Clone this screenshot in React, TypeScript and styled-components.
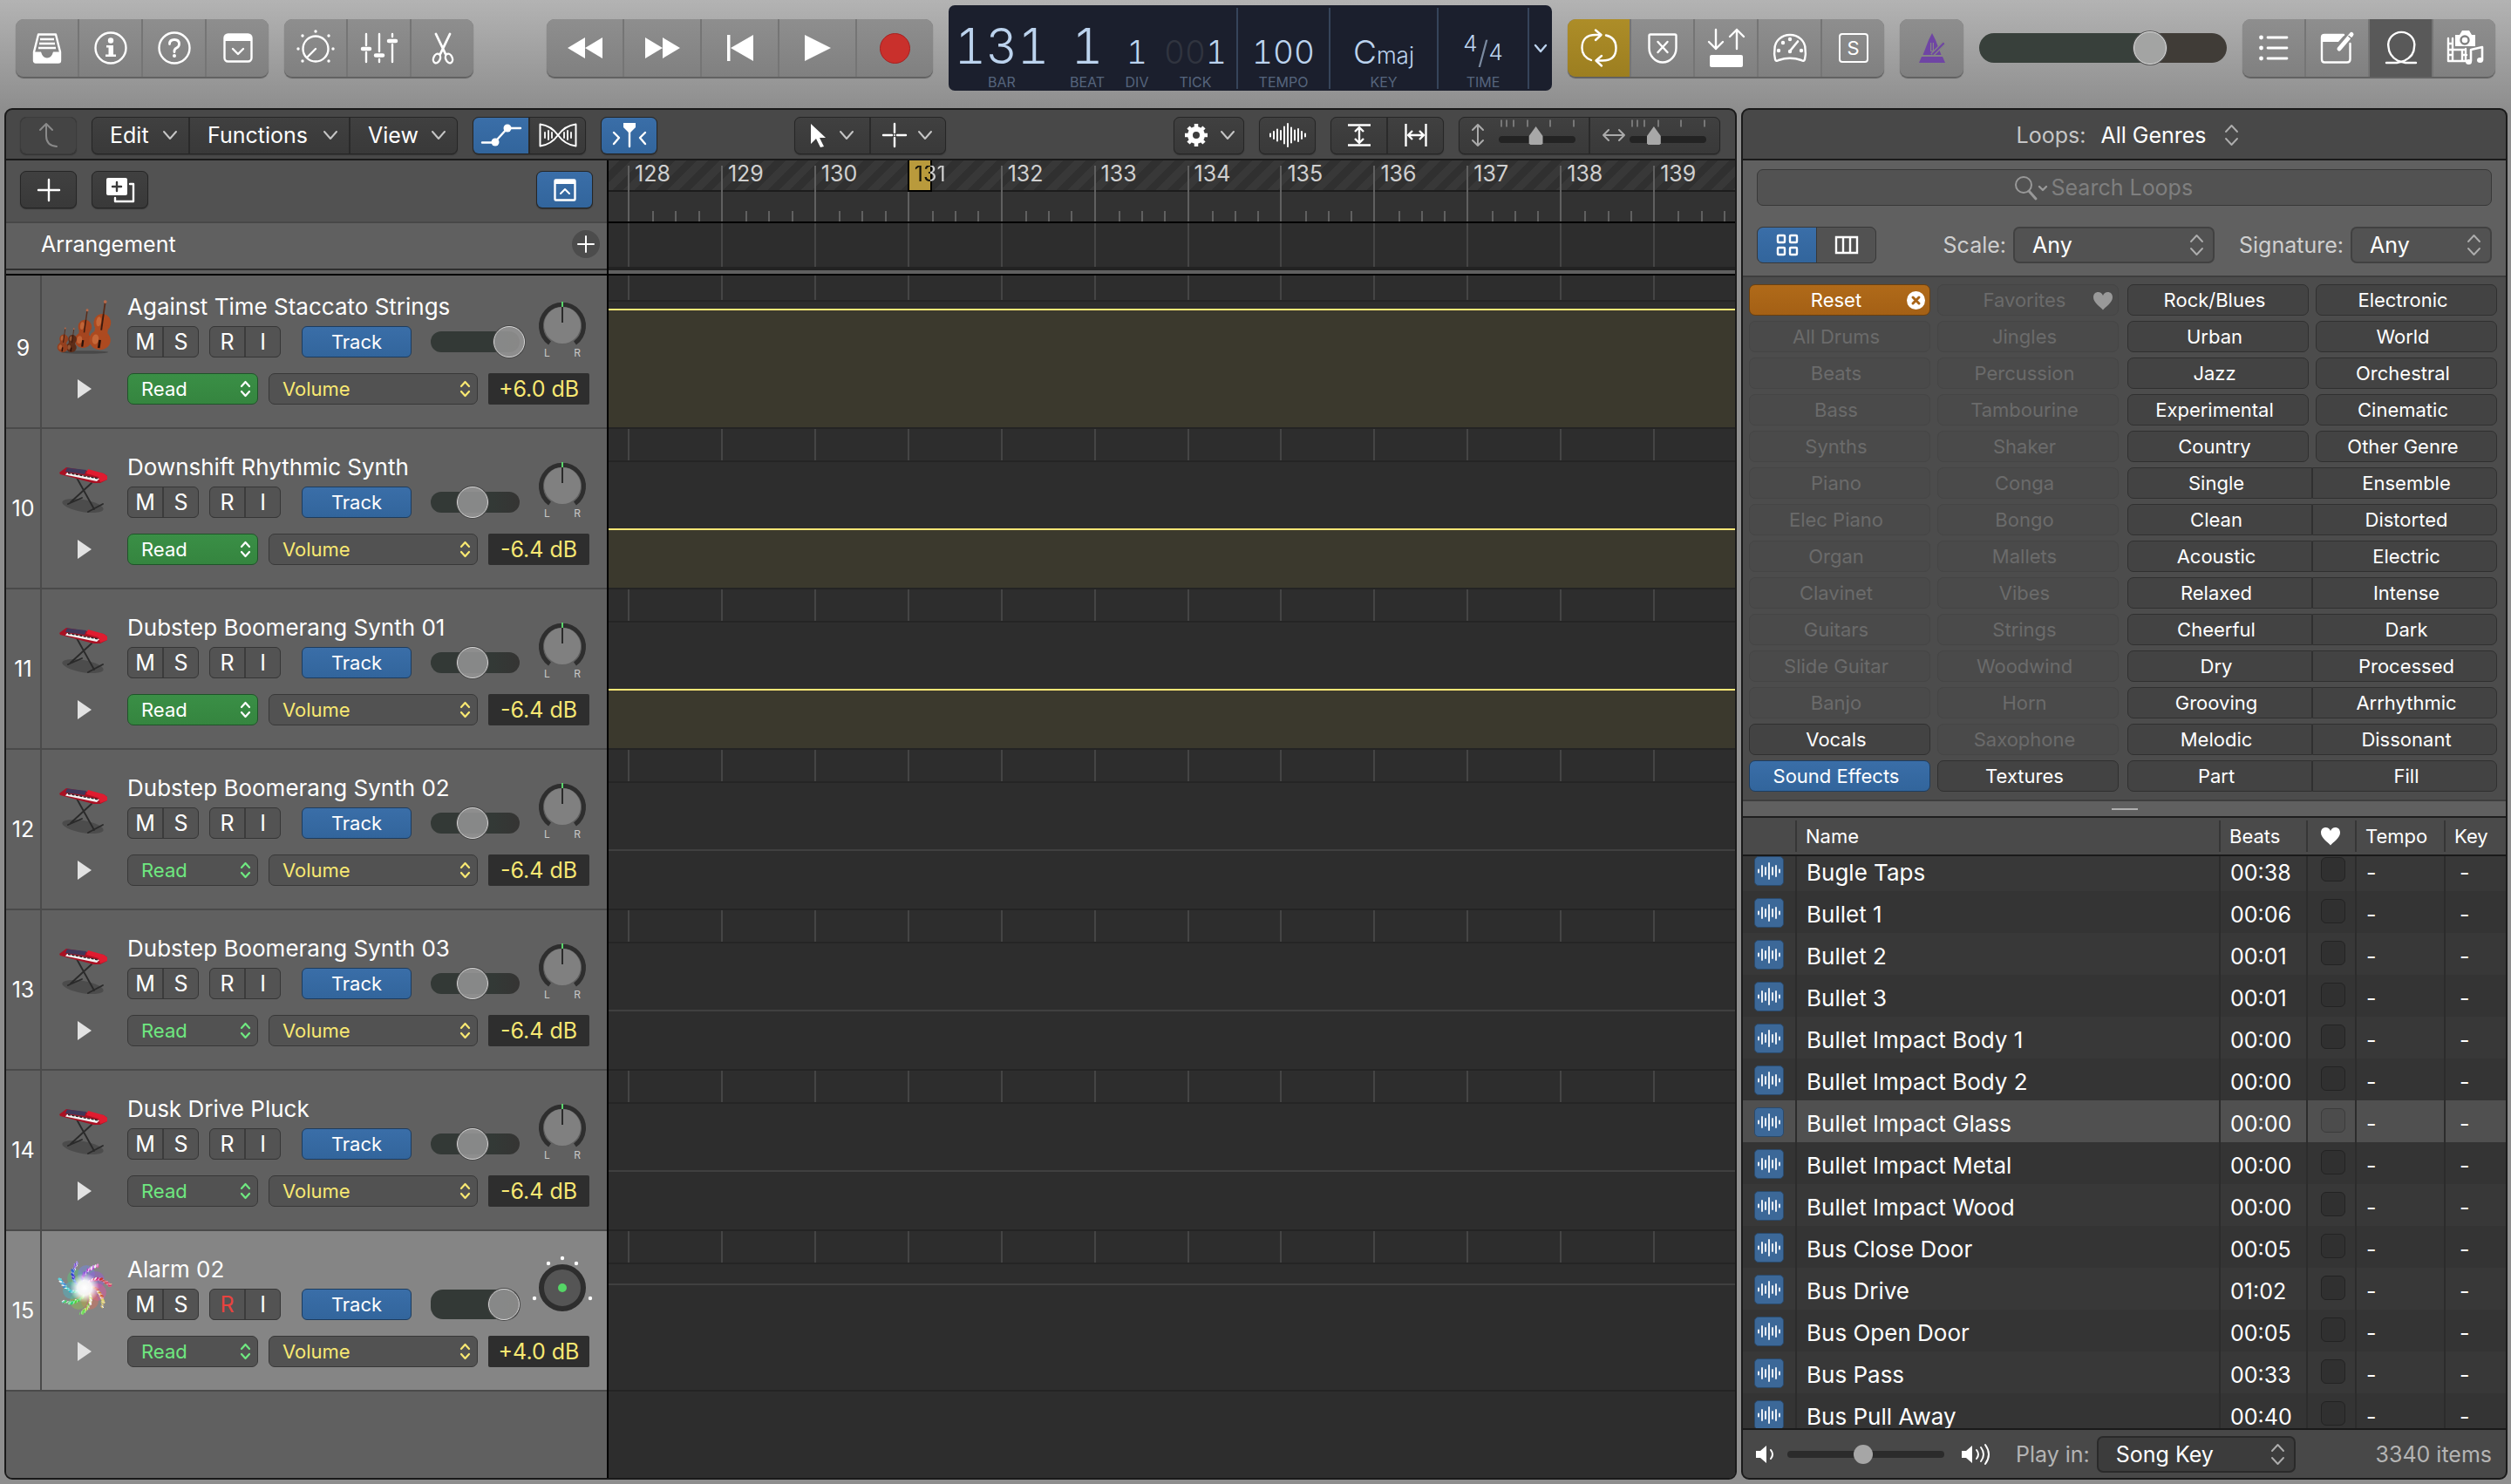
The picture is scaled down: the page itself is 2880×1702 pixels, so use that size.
import React, { ReactNode, useLayoutEffect, useRef } from "react";
import styled, { createGlobalStyle, css } from "styled-components";

const sans = `Inter, "Liberation Sans", sans-serif`;
const blue = "linear-gradient(#3a6ea8, #32659c)";

const GlobalStyle = createGlobalStyle`
  *, *::before, *::after { box-sizing: border-box; }
  body { margin: 0; overflow: hidden; background: #8e8e8e; }
  button, input, select, output, table { font: inherit; color: inherit; }
  button { cursor: pointer; }
  svg { display: block; flex: none; overflow: visible; }
`;

/* ---------- shared parts ---------- */

const Svg = styled.svg`
  fill: none;
  stroke: currentColor;
  stroke-width: 2.4;
  stroke-linecap: round;
  stroke-linejoin: round;
`;

function Icon({ w, h, children }: { w: number; h: number; children: ReactNode }) {
  return (
    <Svg width={w} height={h} viewBox={`0 0 ${w} ${h}`} aria-hidden="true">
      {children}
    </Svg>
  );
}

const solid = { fill: "currentColor", stroke: "none" };

const ChevronDown = () => (
  <Icon w={16} h={10}><path d="M1 1l7 8 7-8" opacity=".7" strokeWidth="2" /></Icon>
);
const UpDown = () => (
  <Icon w={15} h={24}><path d="M1 8l6.500-7 6.500 7M1 16l6.500 7 6.500-7" strokeWidth="1.900" /></Icon>
);
const SmallUpDown = () => (
  <Icon w={11} h={18}><path d="M1 6l4.500-5 4.500 5M1 12l4.500 5 4.500-5" strokeWidth="2.200" /></Icon>
);

const bareRange = css`
  appearance: none;
  margin: 0;
  background: transparent;
  &::-webkit-slider-thumb { appearance: none; }
`;

const SelectBox = styled.span<{ $width?: number; $tone?: "dark" | "mid" | "plain" }>`
  position: relative;
  display: flex;
  align-items: center;
  height: 42px;
  ${(p) => p.$width && `width: ${p.$width}px;`}
  ${(p) => p.$tone !== "plain" && css`
    border: 2px solid ${p.$tone === "dark" ? "#2a2a2a" : "#414141"};
    border-radius: 7px;
    background: ${p.$tone === "dark" ? "#3c3c3c" : "#525252"};
  `}
  select {
    appearance: none;
    width: 100%;
    height: 100%;
    padding: 0 ${(p) => (p.$tone === "plain" ? 36 : 20)}px 0 ${(p) => (p.$tone === "plain" ? 0 : 20)}px;
    border: 0;
    background: transparent;
    color: #fff;
  }
  svg {
    position: absolute;
    right: ${(p) => (p.$tone === "plain" ? 0 : 11)}px;
    color: #adadad;
    pointer-events: none;
  }
`;

/* ---------- window and control bar ---------- */

const Window = styled.div`
  display: flex;
  flex-direction: column;
  height: 100vh;
  background: linear-gradient(#b3b3b3 0, #8e8e8e 124px);
  font: 400 25px/28px ${sans};
  color: #fff;
`;

const ControlBar = styled.header`
  display: flex;
  flex: none;
  align-items: center;
  gap: 18px;
  height: 124px;
  padding: 0 18px 14px;
`;

const Grow = styled.div<{ $share?: number }>`
  flex: ${(p) => p.$share ?? 1};
`;

const BarGroup = styled.div`
  display: flex;
  gap: 2px;
  height: 66px;
  overflow: hidden;
  border-radius: 9px;
  background: #757575;
  box-shadow: 0 2px 1px #606060;
`;

const BarButton = styled.button<{ $width?: number; $state?: "cycle" | "down" }>`
  display: grid;
  place-items: center;
  width: ${(p) => p.$width ?? 71}px;
  padding: 0;
  border: 0;
  color: #fff;
  background: ${(p) =>
    p.$state === "cycle" ? "linear-gradient(#ad8d28, #9c7e20)" : p.$state === "down" ? "#595959" : "linear-gradient(#8e8e8e, #808080)"};
`;

const Record = styled.span`
  width: 35px;
  height: 35px;
  border: 1px solid #a82020;
  border-radius: 50%;
  background: #c9302c;
`;

const SoloBox = styled.span`
  display: grid;
  place-items: center;
  width: 34px;
  height: 34px;
  border: 2px solid #fff;
  border-radius: 4px;
  font-size: 22px;
`;

const MasterVolume = styled.input`
  ${bareRange}
  width: 284px;
  height: 40px;
  &::-webkit-slider-runnable-track {
    height: 34px;
    border-radius: 17px;
    background: linear-gradient(90deg, #38403b 70%, #403c37 70%);
  }
  &::-webkit-slider-thumb {
    width: 38px;
    height: 38px;
    margin-top: -2px;
    border: 1px solid #e0e0e0;
    border-radius: 50%;
    background: #a3a4a3;
    box-shadow: 0 0 0 1px #555;
  }
`;

/* ---------- LCD ---------- */

const Lcd = styled.div`
  display: flex;
  height: 98px;
  padding: 3px 0 2px;
  border-radius: 7px;
  background: #1b1f2d;
  color: #bcd3ee;
`;

const LcdCell = styled.div<{ $cols: string }>`
  display: grid;
  grid-template-columns: ${(p) => p.$cols};
  border-right: 2px solid #36445a;
`;

const LcdField = styled.div`
  display: flex;
  flex-direction: column;
  align-items: center;
  gap: 13px;
  padding-top: 3px;
`;

const LcdValue = styled.span<{ $size: number }>`
  font-size: ${(p) => p.$size}px;
  font-weight: 300;
  font-variant-numeric: tabular-nums;
  line-height: 0;
  white-space: nowrap;
  &::before {
    content: "";
    display: inline-block;
    height: 61px;
  }
  i { font-style: normal; color: #30343f; }
  small { font-size: 26px; }
`;

const Numerator = styled.span`vertical-align: 14px;`;
const Slash = styled.span`font-size: 36px; opacity: .6;`;
const Denominator = styled.span`vertical-align: 4px;`;

const LcdLabel = styled.span`
  font-size: 16px;
  line-height: 16px;
  color: #56657d;
`;

const LcdMenu = styled.button`
  display: grid;
  place-items: center;
  width: 26px;
  padding: 0;
  border: 0;
  background: none;
`;

/* ---------- panels ---------- */

const Panels = styled.main`
  display: grid;
  flex: 1;
  grid-template-columns: minmax(0, 1fr) 879px;
  gap: 5px;
  min-height: 0;
  padding: 0 4px 5px 5px;
`;

const Panel = styled.section`
  display: flex;
  flex-direction: column;
  min-width: 0;
  min-height: 0;
  overflow: hidden;
  border: 2px solid #1a1a1a;
  border-radius: 9px;
  background: #484848;
`;

const PanelBar = styled.div`
  display: flex;
  flex: none;
  align-items: center;
  gap: 17px;
  height: 58px;
  padding: 2px 17px 0 16px;
  border-bottom: 2px solid #1a1a1a;
`;

const ToolGroup = styled.div<{ $dim?: boolean }>`
  display: flex;
  gap: 2px;
  height: 43px;
  overflow: hidden;
  border: 1px solid ${(p) => (p.$dim ? "#3c3c3c" : "#262626")};
  border-radius: 7px;
  background: #2a2a2a;
  box-shadow: 0 1px 1px #333;
`;

const Tool = styled.button<{ $width?: number; $on?: boolean; $dim?: boolean }>`
  display: flex;
  align-items: center;
  justify-content: center;
  gap: 14px;
  width: ${(p) => p.$width ?? 63}px;
  padding: 0;
  border: 0;
  color: ${(p) => (p.$dim ? "#8a8a8a" : "#fff")};
  background: ${(p) => (p.$on ? blue : p.$dim ? "#444" : "linear-gradient(#404040, #393939)")};
`;

const MenuTool = styled(Tool)`
  justify-content: space-between;
  padding: 0 13px 0 20px;
`;

const ZoomTool = styled.label`
  display: flex;
  align-items: center;
  justify-content: space-between;
  width: 148px;
  padding: 0 15px 0 14px;
  color: #aaa;
  background: linear-gradient(#404040, #393939);
`;

const ZoomScale = styled.span`
  display: flex;
  flex-direction: column;
  gap: 2px;
`;

const ZoomRange = styled.input`
  ${bareRange}
  width: 88px;
  height: 24px;
  &::-webkit-slider-runnable-track {
    height: 8px;
    border-radius: 4px;
    background: #232323;
  }
  &::-webkit-slider-thumb {
    width: 18px;
    height: 21px;
    margin-top: -11px;
    background: #a8a8a8;
    clip-path: polygon(50% 0, 94% 52%, 94% 92%, 86% 100%, 14% 100%, 6% 92%, 6% 52%);
  }
`;

/* ---------- arrange area ---------- */

const Split = styled.div`
  display: grid;
  flex: none;
  grid-template-columns: 691px minmax(0, 1fr);
`;

const HeaderSide = styled.div`
  border-right: 2px solid #000;
`;

const HeaderTools = styled.div`
  display: flex;
  align-items: flex-start;
  gap: 17px;
  height: 72px;
  padding: 12px 16px 0;
  border-bottom: 2px solid #484848;
  background: #525252;
`;

const ArrangementHead = styled.div`
  display: flex;
  align-items: center;
  justify-content: space-between;
  height: 54px;
  padding: 0 8px 4px 40px;
  border-bottom: 2px solid #2e2e2e;
  background: #606060;
`;

const AddMarker = styled.button`
  display: grid;
  place-items: center;
  width: 32px;
  height: 32px;
  padding: 0;
  border: 0;
  border-radius: 50%;
  background: #4c4c4c;
`;

const Divider = styled.div`
  height: 6px;
  border-bottom: 2px solid #000;
  background: #606060;
`;

const LaneSide = styled.div`
  min-width: 0;
  overflow: hidden;
  background: #2d2d2d;
`;

const Ruler = styled.div`
  height: 72px;
  padding-top: 6px;
  border-bottom: 2px solid #000;
  background:
    linear-gradient(#1c1c1c, #1c1c1c) 0 34px / 100% 2px no-repeat,
    linear-gradient(#323232, #323232) 0 36px / 100% 34px no-repeat,
    repeating-linear-gradient(135deg, #383838 0 9px, #303030 9px 18px);
`;

const Bars = styled.div`
  display: flex;
  height: 100%;
  margin-right: -13px;
  padding-left: 22px;
`;

const Bar = styled.div<{ $bright?: boolean }>`
  position: relative;
  display: flex;
  flex: 1;
  flex-direction: column;
  justify-content: space-between;
  min-width: 0;
  border-left: 2px solid ${(p) => (p.$bright ? "#606060" : "#454545")};
`;

const BarNumber = styled.span<{ $split?: boolean }>`
  position: relative;
  width: max-content;
  padding-left: 6px;
  line-height: 18px;
  color: #d0d0d0;
  ${(p) => p.$split && css`
    color: transparent;
    background: linear-gradient(90deg, #15120a 24px, #d0d0d0 24px);
    background-clip: text;
  `}
`;

const Cycle = styled.span`
  position: absolute;
  top: -6px;
  left: -2px;
  width: 28px;
  height: 36px;
  border: solid #000;
  border-width: 0 2px 2px;
  background: #b99a3c;
`;

const Beats = styled.div`
  display: grid;
  grid-template-columns: repeat(4, 1fr);
  height: 12px;
  span + span { border-left: 2px solid #606060; }
`;

const MarkerLane = styled.div`
  height: 54px;
  border-bottom: 4px solid #222;
`;

const TrackScroller = styled.div`
  flex: 1;
  min-height: 0;
  overflow: hidden;
`;

const TrackContent = styled.div`
  display: grid;
  grid-template-columns: 691px minmax(0, 1fr);
  min-height: calc(100% + 8px);
`;

const TrackHeaders = styled.div`
  border-right: 2px solid #000;
  background: #606060;
`;

const TrackRow = styled.article<{ $selected?: boolean }>`
  display: flex;
  height: 184px;
  border-bottom: 2px solid #4a4a4a;
  background: ${(p) => (p.$selected ? "#858585" : "#606060")};
`;

const TrackNumber = styled.div`
  display: grid;
  flex: none;
  place-items: center;
  width: 41px;
  border-right: 2px solid #4a4a4a;
`;

const TrackBody = styled.div`
  display: grid;
  flex: 1;
  grid-template-columns: 98px minmax(0, 1fr);
  grid-template-rows: 72px 36px;
  row-gap: 18px;
  padding: 30px 20px 0 0;
`;

const Portrait = styled.div`
  display: grid;
  place-items: center;
`;

const Disclosure = styled.button`
  display: grid;
  place-items: center;
  padding: 0;
  border: 0;
  background: none;
  color: #e2e2e2;
`;

const TrackTop = styled.div`
  display: grid;
  grid-template-columns: minmax(0, 1fr) 62px;
`;

const TrackName = styled.h2`
  margin: 0 0 8px;
  font: inherit;
  font-size: 26px;
  white-space: nowrap;
`;

const TrackControls = styled.div`
  display: flex;
  align-items: center;
`;

const Pair = styled.div`
  display: flex;
  gap: 2px;
  width: 82px;
  height: 36px;
  margin-right: 12px;
  overflow: hidden;
  border: 1px solid #363636;
  border-radius: 6px;
  background: #3c3c3c;
`;

const PairButton = styled.button<{ $armed?: boolean }>`
  flex: 1;
  padding: 0;
  border: 0;
  background: #535353;
  color: ${(p) => (p.$armed ? "#e8433f" : "#fff")};
`;

const TrackButton = styled.button`
  width: 126px;
  height: 36px;
  margin: 0 22px 0 12px;
  padding: 0;
  border: 1px solid #1d3c5e;
  border-radius: 6px;
  background: ${blue};
  font-size: 22px;
`;

const Fader = styled.label<{ $stereo?: boolean }>`
  position: relative;
  display: flex;
  align-items: center;
  width: 102px;
  height: 36px;
  &::before {
    content: "";
    width: 102px;
    height: ${(p) => (p.$stereo ? 34 : 24)}px;
    border-radius: 14px;
    background: linear-gradient(90deg, #333936 70%, #353433);
  }
  input {
    ${bareRange}
    position: absolute;
    left: 0;
    width: 108px;
    height: 36px;
  }
  input::-webkit-slider-thumb {
    width: 36px;
    height: 36px;
    border: 1px solid #d5d5d5;
    border-radius: 50%;
    background: rgb(150 150 150 / 85%);
    box-shadow: 0 0 0 1px #484848;
  }
`;

const Pan = styled.div`
  display: flex;
  flex-direction: column;
  align-items: center;
  padding-top: 8px;
`;

const PanEnds = styled.div`
  display: flex;
  justify-content: space-between;
  width: 42px;
  font-size: 12px;
  line-height: 10px;
  color: #c8c8c8;
`;

const Automation = styled.div`
  display: grid;
  grid-template-columns: 150px 240px 116px;
  gap: 12px;
  font-size: 22px;
`;

const AutomationSelect = styled.span<{ $ink: string; $filled?: boolean }>`
  position: relative;
  display: flex;
  align-items: center;
  border: 1px solid ${(p) => (p.$filled ? "#1e5428" : "#383838")};
  border-radius: 7px;
  background: ${(p) => (p.$filled ? "linear-gradient(#3a8f46, #35853f)" : "#525252")};
  color: ${(p) => p.$ink};
  select {
    appearance: none;
    width: 100%;
    height: 100%;
    padding: 0 15px;
    border: 0;
    background: none;
  }
  svg { position: absolute; right: 8px; pointer-events: none; }
`;

const Level = styled.output`
  display: grid;
  place-items: center;
  border-radius: 2px;
  background: #2e2e2e;
  color: #f8e872;
  font-size: 25px;
  white-space: nowrap;
`;

const Lanes = styled.div`
  min-width: 0;
  overflow: hidden;
  background: #2d2d2d;
`;

const Lane = styled.div`
  position: relative;
  height: 184px;
  border-bottom: 2px solid #242424;
`;

const LaneGrid = styled.div`
  height: 38px;
  border-bottom: 2px solid #252525;
`;

const Curve = styled.div<{ $active?: boolean }>`
  position: absolute;
  right: 0;
  bottom: 0;
  left: 0;
  border-top: 2px solid ${(p) => (p.$active ? "#fde877" : "#404040")};
  background: ${(p) => (p.$active ? "#3b392d" : "transparent")};
`;

/* ---------- loop browser ---------- */

const LoopBar = styled(PanelBar)`
  justify-content: center;
  padding-left: 24px;
  color: #c6c6c6;
`;

const Filters = styled.div`
  flex: none;
  padding: 10px 16px 14px;
  border-bottom: 2px solid #3e3e3e;
  background: #606060;
`;

const Search = styled.label`
  display: flex;
  align-items: center;
  justify-content: center;
  height: 42px;
  border: 1px solid #383838;
  border-radius: 7px;
  background: #525252;
  color: #989898;
  input {
    width: 214px;
    padding: 0 0 0 4px;
    border: 0;
    outline: 0;
    background: none;
  }
  input::placeholder { color: #7f7f7f; }
`;

const FilterRow = styled.div`
  display: flex;
  align-items: center;
  gap: 8px;
  margin-top: 24px;
  color: #cfcfcf;
`;

const ViewToggle = styled.div`
  display: flex;
  gap: 1px;
  width: 137px;
  height: 42px;
  margin-right: auto;
  overflow: hidden;
  border: 1px solid #383838;
  border-radius: 7px;
  background: #383838;
`;

const ViewButton = styled.button<{ $on?: boolean }>`
  display: grid;
  flex: 1;
  place-items: center;
  padding: 0;
  border: 0;
  color: #fff;
  background: ${(p) => (p.$on ? blue : "#525252")};
`;

const FilterLabel = styled.label<{ $gap?: boolean }>`
  margin-left: ${(p) => (p.$gap ? 20 : 0)}px;
`;

const Keywords = styled.div`
  display: grid;
  flex: none;
  grid-template-columns: 1fr 1fr;
  column-gap: 10px;
  padding: 8px 10px 9px 7px;
  border-bottom: 2px solid #3e3e3e;
  background: #4c4c4c;
  font-size: 22px;
`;

const KeywordColumn = styled.div`
  display: flex;
  flex-direction: column;
  gap: 6px;
`;

const KeywordRow = styled.div<{ $joined?: boolean }>`
  display: grid;
  grid-template-columns: 1fr 1fr;
  gap: ${(p) => (p.$joined ? 0 : 8)}px;
  height: 36px;
`;

type KeywordTone = "off" | "on" | "reset" | "blue";

const Keyword = styled.button<{ $tone: KeywordTone; $edge?: "left" | "right" }>`
  position: relative;
  padding: ${(p) => (p.$edge === "right" ? "0 0 0 4px" : "0 8px 0 0")};
  border: 1px solid ${(p) => ({ off: "#454545", on: "#303030", reset: "#6a4010", blue: "#1e3d60" })[p.$tone]};
  border-radius: ${(p) => (p.$edge === "left" ? "7px 0 0 7px" : p.$edge === "right" ? "0 7px 7px 0" : "7px")};
  background: ${(p) => ({ off: "#4a4a4a", on: "#434343", reset: "linear-gradient(#b06a19, #a46015)", blue })[p.$tone]};
  color: ${(p) => (p.$tone === "off" ? "#6b6b6b" : "#fff")};
  svg {
    position: absolute;
    top: 7px;
    right: 5px;
  }
`;

const Grip = styled.div`
  display: grid;
  flex: none;
  place-items: center;
  height: 19px;
  border-bottom: 2px solid #1e1e1e;
  background: #606060;
  &::before {
    content: "";
    width: 30px;
    height: 2px;
    background: #b0b0b0;
  }
`;

const Results = styled.div`
  flex: 1;
  min-height: 0;
  overflow: hidden;
`;

const LoopTable = styled.table`
  width: 100%;
  border-spacing: 0;
  table-layout: fixed;
  th {
    position: sticky;
    top: 0;
    z-index: 1;
    height: 44px;
    padding: 0 0 0 12px;
    border-bottom: 2px solid #1a1a1a;
    background: #4a4a4a;
    font-size: 22px;
    font-weight: 400;
    text-align: left;
  }
  th + th { background: linear-gradient(#363636, #363636) left center / 2px 36px no-repeat #4a4a4a; }
  th:nth-child(4) { padding-left: 16px; }
  td {
    height: 48px;
    padding: 6px 0 0 13px;
    white-space: nowrap;
  }
  td:nth-child(2) { font-size: 26px; }
  td + td { padding-left: 11px; border-left: 2px solid #2c2c2c; }
  td:last-child { padding-left: 16px; }
`;

const LoopRow = styled.tr<{ $playing?: boolean }>`
  background: #383838;
  &:nth-child(even) { background: #343434; }
  ${(p) => p.$playing && css`&& { background: #505050; }`}
`;

const Col = styled.col<{ $width?: number }>`
  ${(p) => p.$width && `width: ${p.$width}px;`}
`;

const LoopKind = styled.span`
  display: grid;
  place-items: center;
  width: 34px;
  height: 34px;
  margin-top: -4px;
  border: 1px solid #2a4a6c;
  border-radius: 5px;
  background: #3c6898;
`;

const FavoriteBox = styled.input<{ $playing?: boolean }>`
  appearance: none;
  display: block;
  width: 28px;
  height: 28px;
  margin: -8px 0 0 4px;
  border: 1px solid ${(p) => (p.$playing ? "#3c3c3c" : "#232323")};
  border-radius: 6px;
  background: ${(p) => (p.$playing ? "#4c4c4c" : "#303030")};
`;

const Footer = styled.footer`
  display: flex;
  flex: none;
  align-items: center;
  height: 57px;
  padding: 0 16px 0 15px;
  border-top: 2px solid #1a1a1a;
  color: #b4b4b4;
  label { margin: 0 8px 0 30px; }
  svg { color: #fff; }
  select + svg { color: #adadad; }
`;

const PreviewVolume = styled.input`
  ${bareRange}
  width: 180px;
  height: 24px;
  margin: 0 20px 0 14px;
  &::-webkit-slider-runnable-track {
    height: 8px;
    border-radius: 4px;
    background: #2b2b2b;
  }
  &::-webkit-slider-thumb {
    width: 22px;
    height: 22px;
    margin-top: -7px;
    border-radius: 50%;
    background: #a6a6a6;
  }
`;

const ItemCount = styled.span`margin-left: auto;`;

/* ---------- drawings ---------- */

const wave = (heights: number[], step: number, h: number) =>
  heights.map((v, i) => `M${1 + i * step} ${(h - v) / 2}v${v}`).join("");

const Heart = ({ fill }: { fill: string }) => (
  <Icon w={24} h={22}>
    <path d="M12 21.500C9 18 1 13 1 7C1 3 3.500 1 6.500 1C9 1 11 2.500 12 5C13 2.500 15 1 17.500 1C20.500 1 23 3 23 7C23 13 15 18 12 21.500Z" fill={fill} stroke="none" />
  </Icon>
);

/* Two round bouts joined by a waist; the foot is at the origin and the scroll 60 above it. */
const Violin = ({ x, y, s, shade }: { x: number; y: number; s: number; shade: string }) => (
  <g transform={`translate(${x} ${y}) rotate(8) scale(${s})`} stroke="none">
    <rect x="-1" y="-60" width="2" height="20" fill="#5a2c1a" />
    <circle cx="0" cy="-59" r="2" fill="#b8694a" />
    <ellipse cx="0" cy="-12" rx="13" ry="12" fill={shade} />
    <ellipse cx="0" cy="-33" rx="10.500" ry="11" fill={shade} />
    <rect x="-8" y="-30" width="16" height="14" fill={shade} />
    <ellipse cx="-4.500" cy="-34" rx="3" ry="6" fill="#e8935c" opacity=".4" />
    <ellipse cx="-5.500" cy="-12" rx="4" ry="6" fill="#e8935c" opacity=".4" />
    <rect x="-1" y="-44" width="2" height="20" fill="#3a1a0e" />
    <rect x="-1.500" y="-12" width="3" height="10" fill="#2a1008" />
  </g>
);

const StringsArt = () => (
  <Icon w={64} h={64}>
    <ellipse cx="32" cy="62" rx="27" ry="1.800" fill="#000" opacity=".25" stroke="none" />
    <Violin x={29} y={57} s={0.74} shade="#a5451f" />
    <Violin x={16} y={62} s={0.46} shade="#5d2c18" />
    <Violin x={6} y={62} s={0.47} shade="#94401f" />
    <Violin x={48} y={59} s={0.94} shade="#ad4a20" />
  </Icon>
);

const KeyboardArt = () => (
  <Icon w={64} h={64}>
    <ellipse cx="30" cy="54" rx="24" ry="7" fill="#000" opacity=".2" stroke="none" transform="rotate(10 30 54)" />
    <path d="M23 22L43 58M40 28L16 50M36 61l17-9M13 52l16-7" stroke="#2a2a2a" strokeWidth="1.900" />
    <path d="M3 16L11 10L54 17L58 20V24L50 28H42L4 18Z" fill="#a81224" stroke="none" />
    <path d="M36 12L54 17L58 20V24L50 27L48 21L34 17Z" fill="#e01c30" stroke="none" />
    <path d="M12 10.500L34 13L32 18L10 15Z" fill="#40385a" stroke="none" />
    <path d="M12 16L49 23L46 26L10 18.500Z" fill="#f4f4f4" stroke="none" />
    <path d="M13 16.500L48 23" stroke="#222" strokeWidth="1.300" strokeDasharray="3 1.500" strokeLinecap="butt" />
  </Icon>
);

const glows: [number, number, string][] = [
  [22, 20, "#58c878"], [34, 15, "#7088e8"], [45, 22, "#9858d8"], [47, 36, "#e850a8"],
  [38, 46, "#e07058"], [25, 46, "#90c050"], [17, 34, "#48b8c8"],
];

const sparks = Array.from({ length: 220 }, (_, i) => {
  const angle = i * 2.4;
  const radius = 8 + ((i * 29) % 43) * 0.5;
  const hue = (angle * 57.3 + 340 + ((i * 37) % 50)) % 360;
  const x = 32 + Math.cos(angle) * radius;
  const y = 31 + Math.sin(angle) * radius;
  return {
    d: `M${x.toFixed(1)} ${y.toFixed(1)}l${(Math.cos(angle) * 2).toFixed(1)} ${(Math.sin(angle) * 2).toFixed(1)}`,
    stroke: i % 7 === 0 ? "#f4f4f4" : `hsl(${hue.toFixed(0)} 65% ${50 + (i % 3) * 12}%)`,
    strokeWidth: 0.8 + (i % 5) * 0.4,
  };
});

const SparkArt = () => (
  <Icon w={64} h={64}>
    <defs>
      <radialGradient id="spark-core">
        <stop offset="0" stopColor="#fff" />
        <stop offset=".5" stopColor="#fff" stopOpacity=".9" />
        <stop offset="1" stopColor="#fff" stopOpacity="0" />
      </radialGradient>
    </defs>
    {glows.map(([cx, cy, fill]) => <circle key={fill} cx={cx} cy={cy} r="10" fill={fill} opacity=".45" stroke="none" />)}
    {sparks.map((s, i) => <path key={i} {...s} />)}
    <circle cx="32" cy="31" r="17" fill="url(#spark-core)" stroke="none" />
  </Icon>
);

const PanKnob = () => (
  <Icon w={54} h={54}>
    <path d="M12.500 47.500A24.500 24.500 0 1 1 41.500 47.500" stroke="#2e2e2e" strokeWidth="5" strokeLinecap="butt" />
    <circle cx="27" cy="27" r="21" fill="#808080" stroke="none" />
    <path d="M27 6v18" stroke="#2a2a2a" strokeWidth="2" strokeLinecap="butt" />
    <path d="M27 0v6" stroke="#5ad66c" strokeWidth="2" strokeLinecap="butt" />
  </Icon>
);

const SurroundKnob = () => (
  <Icon w={54} h={54}>
    <circle cx="27" cy="27" r="24" fill="#555" stroke="#2e2e2e" strokeWidth="6" />
    <circle cx="27" cy="27" r="5" fill="#55d566" stroke="none" />
    {[[27, -7], [11, -1], [43, -1], [-5, 39], [59, 39]].map(([cx, cy]) => (
      <circle key={cx} cx={cx} cy={cy} r="2.200" fill="#fff" stroke="none" />
    ))}
  </Icon>
);

/* ---------- data ---------- */

type Track = {
  id: number; name: string; art: "strings" | "keys" | "spark"; db: string; fader: number;
  active?: boolean; curve: number; selected?: boolean;
};

const tracks: Track[] = [
  { id: 9, name: "Against Time Staccato Strings", art: "strings", db: "+6.0 dB", fader: 100, active: true, curve: 46 },
  { id: 10, name: "Downshift Rhythmic Synth", art: "keys", db: "-6.4 dB", fader: 42, active: true, curve: 114 },
  { id: 11, name: "Dubstep Boomerang Synth 01", art: "keys", db: "-6.4 dB", fader: 42, active: true, curve: 114 },
  { id: 12, name: "Dubstep Boomerang Synth 02", art: "keys", db: "-6.4 dB", fader: 42, curve: 114 },
  { id: 13, name: "Dubstep Boomerang Synth 03", art: "keys", db: "-6.4 dB", fader: 42, curve: 114 },
  { id: 14, name: "Dusk Drive Pluck", art: "keys", db: "-6.4 dB", fader: 42, curve: 114 },
  { id: 15, name: "Alarm 02", art: "spark", db: "+4.0 dB", fader: 92, curve: 60, selected: true },
];

const bars = [128, 129, 130, 131, 132, 133, 134, 135, 136, 137, 138, 139];

const instruments: [string, string][] = [
  ["Reset", "Favorites"], ["All Drums", "Jingles"], ["Beats", "Percussion"], ["Bass", "Tambourine"],
  ["Synths", "Shaker"], ["Piano", "Conga"], ["Elec Piano", "Bongo"], ["Organ", "Mallets"],
  ["Clavinet", "Vibes"], ["Guitars", "Strings"], ["Slide Guitar", "Woodwind"], ["Banjo", "Horn"],
  ["Vocals", "Saxophone"], ["Sound Effects", "Textures"],
];

const genres: [string, string][] = [
  ["Rock/Blues", "Electronic"], ["Urban", "World"], ["Jazz", "Orchestral"],
  ["Experimental", "Cinematic"], ["Country", "Other Genre"],
];

const descriptors: [string, string][] = [
  ["Single", "Ensemble"], ["Clean", "Distorted"], ["Acoustic", "Electric"], ["Relaxed", "Intense"],
  ["Cheerful", "Dark"], ["Dry", "Processed"], ["Grooving", "Arrhythmic"], ["Melodic", "Dissonant"], ["Part", "Fill"],
];

const toneOf: Record<string, KeywordTone> = { Reset: "reset", "Sound Effects": "blue", Vocals: "on", Textures: "on" };

const loops: [string, string][] = [
  ["Bugle Taps", "00:38"], ["Bullet 1", "00:06"], ["Bullet 2", "00:01"], ["Bullet 3", "00:01"],
  ["Bullet Impact Body 1", "00:00"], ["Bullet Impact Body 2", "00:00"], ["Bullet Impact Glass", "00:00"],
  ["Bullet Impact Metal", "00:00"], ["Bullet Impact Wood", "00:00"], ["Bus Close Door", "00:05"],
  ["Bus Drive", "01:02"], ["Bus Open Door", "00:05"], ["Bus Pass", "00:33"], ["Bus Pull Away", "00:40"],
];

/* ---------- sections ---------- */

function TransportBar() {
  return (
    <ControlBar>
      <BarGroup>
        <BarButton aria-label="Library">
          <Icon w={34} h={35}>
            <path d="M7 1.500h20l5 20v10q0 2-2 2h-26q-2 0-2-2v-10z" />
            <path d="M9 7h16M8 12h18M7 17h20" strokeLinecap="butt" />
            <path d="M1.500 21.500h8.500q2 7 7 7t7-7h8.500v10q0 2.500-2 2.500h-27q-2 0-2-2.500z" {...solid} />
          </Icon>
        </BarButton>
        <BarButton aria-label="Inspector">
          <Icon w={38} h={38}>
            <circle cx="19" cy="19" r="17.500" />
            <circle cx="19" cy="10.500" r="3.200" {...solid} />
            <path d="M14 16h8v10.500h3v2.500h-12v-2.500h3.500v-8h-2.500z" {...solid} />
          </Icon>
        </BarButton>
        <BarButton aria-label="Quick Help">
          <Icon w={38} h={38}>
            <circle cx="19" cy="19" r="17.500" />
            <path d="M13.500 14.500q0-5 5.500-5t5.500 5q0 3-3 4.500t-2.500 4.500" strokeWidth="2.800" />
            <circle cx="19" cy="28" r="2" {...solid} />
          </Icon>
        </BarButton>
        <BarButton aria-label="Toolbar">
          <Icon w={34} h={34}>
            <rect x="1.500" y="1.500" width="31" height="31" rx="4" />
            <path d="M2 2h30v7h-30z" {...solid} />
            <path d="M11 18l6 6 6-6" />
          </Icon>
        </BarButton>
      </BarGroup>
      <BarGroup>
        <BarButton aria-label="Smart Controls">
          <Icon w={44} h={44}>
            <circle cx="22" cy="23" r="14.500" />
            <path d="M22 23l-9 9" />
            {[[22, 3], [7, 8], [37, 8], [2, 23], [42, 23], [7, 37], [37, 37]].map(([x, y]) => (
              <circle key={`${x}-${y}`} cx={x} cy={y} r="1.700" {...solid} />
            ))}
          </Icon>
        </BarButton>
        <BarButton aria-label="Mixer">
          <Icon w={42} h={34}>
            <path d="M6 1v13M6 22v11M21 1v20M21 30v3M36 1v3M36 13v20" />
            <path d="M2 18h8M17 25.500h8M32 9h8" strokeWidth="4.500" />
          </Icon>
        </BarButton>
        <BarButton aria-label="Editors">
          <Icon w={26} h={35}>
            <path d="M5 1L16 24M21 1L10 24" strokeWidth="2.800" />
            <ellipse cx="6" cy="29" rx="3.800" ry="5.500" transform="rotate(22 6 29)" />
            <ellipse cx="20" cy="29" rx="3.800" ry="5.500" transform="rotate(-22 20 29)" />
          </Icon>
        </BarButton>
      </BarGroup>
      <Grow />
      <BarGroup>
        <BarButton $width={87} aria-label="Rewind"><Icon w={40} h={24}><path d="M20 0v24L0 12zM40 0v24L20 12z" {...solid} /></Icon></BarButton>
        <BarButton $width={87} aria-label="Forward"><Icon w={40} h={24}><path d="M0 0v24l20-12zM20 0v24l20-12z" {...solid} /></Icon></BarButton>
        <BarButton $width={87} aria-label="Go to Beginning"><Icon w={30} h={30}><path d="M0 0h3.500v30h-3.500zM30 0v30L4 15z" {...solid} /></Icon></BarButton>
        <BarButton $width={87} aria-label="Play"><Icon w={30} h={30}><path d="M0 0v30l30-15z" {...solid} /></Icon></BarButton>
        <BarButton $width={87} aria-label="Record"><Record /></BarButton>
      </BarGroup>
      <Lcd>
        <LcdCell $cols="122px 74px 40px 94px">
          <LcdField><LcdValue $size={56}>131</LcdValue><LcdLabel>BAR</LcdLabel></LcdField>
          <LcdField><LcdValue $size={56}>1</LcdValue><LcdLabel>BEAT</LcdLabel></LcdField>
          <LcdField><LcdValue $size={37}>1</LcdValue><LcdLabel>DIV</LcdLabel></LcdField>
          <LcdField><LcdValue $size={37}><i>00</i>1</LcdValue><LcdLabel>TICK</LcdLabel></LcdField>
        </LcdCell>
        <LcdCell $cols="104px"><LcdField><LcdValue $size={37}>100</LcdValue><LcdLabel>TEMPO</LcdLabel></LcdField></LcdCell>
        <LcdCell $cols="122px"><LcdField><LcdValue $size={37}>C<small>maj</small></LcdValue><LcdLabel>KEY</LcdLabel></LcdField></LcdCell>
        <LcdCell $cols="102px">
          <LcdField>
            <LcdValue $size={26}><Numerator>4</Numerator><Slash>/</Slash><Denominator>4</Denominator></LcdValue>
            <LcdLabel>TIME</LcdLabel>
          </LcdField>
        </LcdCell>
        <LcdMenu aria-label="Display mode"><Icon w={14} h={9}><path d="M1 1l6 7 6-7" /></Icon></LcdMenu>
      </Lcd>
      <BarGroup>
        <BarButton $state="cycle" aria-label="Cycle">
          <Icon w={42} h={42}>
            <path d="M12 35Q1.500 31 1.500 21Q1.500 6 17 6H23M29 6.500Q40.500 9 40.500 21Q40.500 35.500 25 35.500H18" />
            <path d="M17 .5l6.500 5.500-6.500 6M24 30l-6.500 5.500 6.500 6" />
          </Icon>
        </BarButton>
        <BarButton aria-label="Low Latency Mode">
          <Icon w={34} h={35}>
            <path d="M3 1.500h28q1.500 0 1.500 1.500v14A15.500 16.500 0 0 1 1.500 17V3q0-1.500 1.500-1.500z" />
            <path d="M11.500 10l11 12M22.500 10l-11 12" />
          </Icon>
        </BarButton>
        <BarButton aria-label="Replace">
          <Icon w={42} h={44}>
            <path d="M9 1v22M1 15l8 8 8-8M33 23v-22M25 9l8-8 8 8" />
            <rect x="2" y="30" width="38" height="14" rx="2" {...solid} />
          </Icon>
        </BarButton>
        <BarButton aria-label="Performance">
          <Icon w={38} h={32}>
            <path d="M2 29C.5 24 1 20 1.500 17A17.500 16 0 0 1 36.500 17C37 20 37.500 24 36 29Q35 32 32 30Q19 25.500 6 30Q3 32 2 29z" />
            <path d="M19 19.500l9-11" strokeWidth="2.600" />
            {[[6, 19], [11, 10], [19, 6], [19, 20], [32, 19]].map(([x, y]) => <circle key={`${x}-${y}`} cx={x} cy={y} r="2.200" {...solid} />)}
          </Icon>
        </BarButton>
        <BarButton aria-label="Solo"><SoloBox>S</SoloBox></BarButton>
      </BarGroup>
      <BarGroup>
        <BarButton $width={73} aria-label="Metronome">
          <Icon w={30} h={34}>
            <g fill="#6f45a4" stroke="none">
              <path d="M15 0L19 8L25.500 25H4.500L11 8z" />
              <path d="M3 27h24l3 7H0z" />
            </g>
            <path d="M15 11v10" stroke="#858585" strokeWidth="4" strokeLinecap="butt" />
            <path d="M15 11v9" stroke="#6f45a4" strokeWidth="1.600" strokeLinecap="butt" />
            <path d="M29 11L15 25" stroke="#858585" strokeWidth="5" strokeLinecap="butt" />
            <path d="M28 12L16 24" stroke="#6f45a4" strokeWidth="2.200" />
          </Icon>
        </BarButton>
      </BarGroup>
      <MasterVolume type="range" aria-label="Master volume" defaultValue={72} />
      <BarGroup>
        <BarButton aria-label="List Editors">
          <Icon w={34} h={30}>
            <path d="M10 3h22M10 15h22M10 27h22" strokeWidth="2.800" />
            {[3, 15, 27].map((y) => <circle key={y} cx="2.500" cy={y} r="2.400" {...solid} />)}
          </Icon>
        </BarButton>
        <BarButton aria-label="Note Pad">
          <Icon w={40} h={36}>
            <path d="M27 3H5Q2 3 2 6v25q0 3.500 3 3.500h26q3.500 0 3.500-3.500V13" />
            <path d="M2 3h26l-7 8H2z" {...solid} />
            <path d="M36 2.500L22 19" strokeWidth="5" />
            <path d="M33 4.500l3.500 3" stroke="#858585" strokeWidth="1.500" />
          </Icon>
        </BarButton>
        <BarButton $state="down" aria-label="Loop Browser">
          <Icon w={36} h={35}>
            <path d="M1 34h12Q18 33 22 31.500Q33 26 33 16A15 14.500 0 1 0 3.500 16Q4 26 14 31.500Q18 33 23 34H35" />
          </Icon>
        </BarButton>
        <BarButton aria-label="Browsers">
          <Icon w={42} h={40}>
            <path d="M2 9v26h20V21M7 9v26M2 15h5M2 22h20M2 28h5M18 22v13M18 28h5" />
            <path d="M10 5h5l3-5h8l3 5h4v13H10z" {...solid} />
            <circle cx="21" cy="11" r="4.500" stroke="#808080" />
            <path d="M28 35V22l13-3v15" strokeWidth="2.600" />
            <ellipse cx="25.500" cy="36" rx="3.500" ry="3" {...solid} />
            <ellipse cx="38.500" cy="34" rx="3.500" ry="3" {...solid} />
          </Icon>
        </BarButton>
      </BarGroup>
    </ControlBar>
  );
}

const ZoomTicks = () => (
  <Icon w={88} h={8}><path d="M3 0v7M9 0v7M17 0v7M33 0v7M59 0v7M86 0v7" strokeWidth="1.500" opacity=".7" /></Icon>
);

function TracksToolbar() {
  return (
    <PanelBar>
      <ToolGroup $dim>
        <Tool $dim aria-label="Up"><Icon w={24} h={28}><path d="M9 1v14q0 11 12 12M2 8l7-7 7 7" strokeWidth="2" /></Icon></Tool>
      </ToolGroup>
      <ToolGroup>
        <MenuTool $width={110}>Edit<ChevronDown /></MenuTool>
        <MenuTool $width={182}>Functions<ChevronDown /></MenuTool>
        <MenuTool $width={122}>View<ChevronDown /></MenuTool>
      </ToolGroup>
      <ToolGroup>
        <Tool $on aria-label="Automation">
          <Icon w={46} h={26}>
            <path d="M1 21.500h14L30 5h15" />
            <circle cx="16" cy="21" r="4.500" {...solid} /><circle cx="30" cy="5" r="4.500" {...solid} />
          </Icon>
        </Tool>
        <Tool aria-label="Flex">
          <Icon w={44} h={28}>
            <path d="M1.500 1.500v25Q14 25 22 14T42.500 1.500v25Q30 25 22 14T1.500 1.500z" strokeWidth="2" />
            <path d="M7 11v6M11 9v10M15 11v6M29 11v6M33 9v10M37 11v6" strokeWidth="1.800" />
          </Icon>
        </Tool>
      </ToolGroup>
      <ToolGroup>
        <Tool $on aria-label="Catch">
          <Icon w={40} h={28}>
            <path d="M20 6v21M2 11l6 6-6 7M38 11l-6 6 6 7" />
            <path d="M13 0h14v5l-6 6h-2l-6-6z" {...solid} />
          </Icon>
        </Tool>
      </ToolGroup>
      <Grow $share={7} />
      <ToolGroup>
        <Tool $width={85} aria-label="Pointer Tool">
          <Icon w={20} h={27}><path d="M1 0l17 16h-7l5 10-4 1-5-10-6 6z" {...solid} /></Icon><ChevronDown />
        </Tool>
        <Tool $width={85} aria-label="Marquee Tool">
          <Icon w={26} h={26}><path d="M13 0v10M13 16v10M0 13h10M16 13h10" /><circle cx="13" cy="13" r="1" {...solid} /></Icon><ChevronDown />
        </Tool>
      </ToolGroup>
      <Grow $share={13} />
      <ToolGroup>
        <Tool $width={79} aria-label="Settings">
          <Icon w={28} h={28}>
            <circle cx="14" cy="14" r="7" strokeWidth="6" />
            <path d="M14 1v4M14 23v4M1 14h4M23 14h4M5 5l3 3M20 20l3 3M23 5l-3 3M8 20l-3 3" strokeWidth="4.500" strokeLinecap="butt" />
          </Icon>
          <ChevronDown />
        </Tool>
      </ToolGroup>
      <ToolGroup>
        <Tool aria-label="Waveform Zoom"><Icon w={42} h={26}><path d={wave([3, 8, 13, 10, 19, 26, 17, 11, 14, 8, 3], 4, 26)} strokeWidth="2" /></Icon></Tool>
      </ToolGroup>
      <ToolGroup>
        <Tool aria-label="Zoom Vertical"><Icon w={26} h={26}><path d="M0 1.500h26M0 24.500h26M13 4v18M8 9l5-5 5 5M8 17l5 5 5-5" strokeLinecap="butt" /></Icon></Tool>
        <Tool aria-label="Zoom Horizontal"><Icon w={26} h={26}><path d="M1.500 0v26M24.500 0v26M4 13h18M9 8l-5 5 5 5M17 8l5 5-5 5" strokeLinecap="butt" /></Icon></Tool>
      </ToolGroup>
      <ToolGroup>
        <ZoomTool>
          <Icon w={14} h={26}><path d="M7 1v24M1 7l6-6 6 6M1 19l6 6 6-6" strokeWidth="2" /></Icon>
          <ZoomScale><ZoomTicks /><ZoomRange type="range" aria-label="Vertical zoom" defaultValue={48} /></ZoomScale>
        </ZoomTool>
        <ZoomTool>
          <Icon w={26} h={14}><path d="M1 7h24M7 1l-6 6 6 6M19 1l6 6-6 6" strokeWidth="2" /></Icon>
          <ZoomScale><ZoomTicks /><ZoomRange type="range" aria-label="Horizontal zoom" defaultValue={27} /></ZoomScale>
        </ZoomTool>
      </ToolGroup>
    </PanelBar>
  );
}

const GridBars = () => <Bars>{bars.map((n) => <Bar key={n} />)}</Bars>;

function TrackHeader({ track }: { track: Track }) {
  return (
    <TrackRow $selected={track.selected}>
      <TrackNumber>{track.id}</TrackNumber>
      <TrackBody>
        <Portrait>{track.art === "strings" ? <StringsArt /> : track.art === "keys" ? <KeyboardArt /> : <SparkArt />}</Portrait>
        <TrackTop>
          <div>
            <TrackName>{track.name}</TrackName>
            <TrackControls>
              <Pair><PairButton>M</PairButton><PairButton>S</PairButton></Pair>
              <Pair><PairButton $armed={track.selected}>R</PairButton><PairButton>I</PairButton></Pair>
              <TrackButton>Track</TrackButton>
              <Fader $stereo={track.selected}>
                <input type="range" aria-label={`${track.name} volume`} defaultValue={track.fader} />
              </Fader>
            </TrackControls>
          </div>
          <Pan>
            {track.selected ? <SurroundKnob /> : <><PanKnob /><PanEnds><span>L</span><span>R</span></PanEnds></>}
          </Pan>
        </TrackTop>
        <Disclosure aria-label="Show automation"><Icon w={16} h={22}><path d="M0 0v22l16-11z" {...solid} /></Icon></Disclosure>
        <Automation>
          <AutomationSelect $ink={track.active ? "#fff" : "#6fe880"} $filled={track.active}>
            <select aria-label="Automation mode"><option>Read</option></select><SmallUpDown />
          </AutomationSelect>
          <AutomationSelect $ink="#f8e872">
            <select aria-label="Automation parameter"><option>Volume</option></select><SmallUpDown />
          </AutomationSelect>
          <Level>{track.db}</Level>
        </Automation>
      </TrackBody>
    </TrackRow>
  );
}

function useScrolled(offset: number) {
  const ref = useRef<HTMLDivElement>(null);
  useLayoutEffect(() => {
    if (ref.current) ref.current.scrollTop = offset;
  }, [offset]);
  return ref;
}

function TracksPanel() {
  const scroller = useScrolled(8);
  return (
    <Panel aria-label="Tracks">
      <TracksToolbar />
      <Split>
        <HeaderSide>
          <HeaderTools>
            <ToolGroup><Tool aria-label="New Track"><Icon w={24} h={24}><path d="M12 0v24M0 12h24" /></Icon></Tool></ToolGroup>
            <ToolGroup>
              <Tool aria-label="Duplicate Track">
                <Icon w={32} h={28}>
                  <rect x="0" y="0" width="24" height="20" rx="2" {...solid} />
                  <path d="M27 7h4v20H10v-4" />
                  <path d="M12 5v10M7 10h10" stroke="#3c3c3c" />
                </Icon>
              </Tool>
            </ToolGroup>
            <Grow />
            <ToolGroup>
              <Tool $on aria-label="Global Tracks">
                <Icon w={26} h={26}>
                  <rect x="1.500" y="1.500" width="23" height="23" rx="1" />
                  <path d="M1 1h24v5H1z" {...solid} />
                  <path d="M8 17l5-5 5 5" strokeWidth="2" />
                </Icon>
              </Tool>
            </ToolGroup>
          </HeaderTools>
          <ArrangementHead>
            Arrangement
            <AddMarker aria-label="Add marker"><Icon w={18} h={18}><path d="M9 0v18M0 9h18" strokeWidth="2" /></Icon></AddMarker>
          </ArrangementHead>
          <Divider />
        </HeaderSide>
        <LaneSide>
          <Ruler>
            <Bars>
              {bars.map((n) => (
                <Bar key={n} $bright>
                  {n === 131 && <Cycle />}
                  <BarNumber $split={n === 131}>{n}</BarNumber>
                  <Beats><span /><span /><span /><span /></Beats>
                </Bar>
              ))}
            </Bars>
          </Ruler>
          <MarkerLane><GridBars /></MarkerLane>
          <Divider />
        </LaneSide>
      </Split>
      <TrackScroller ref={scroller}>
        <TrackContent>
          <TrackHeaders>{tracks.map((t) => <TrackHeader key={t.id} track={t} />)}</TrackHeaders>
          <Lanes>
            {tracks.map((t) => (
              <Lane key={t.id}>
                <LaneGrid><GridBars /></LaneGrid>
                <Curve $active={t.active} style={{ top: t.curve }} />
              </Lane>
            ))}
          </Lanes>
        </TrackContent>
      </TrackScroller>
    </Panel>
  );
}

function LoopsPanel() {
  const scroller = useScrolled(8);
  return (
    <Panel aria-label="Loop Browser">
      <LoopBar>
        <label htmlFor="genre">Loops:</label>
        <SelectBox $tone="plain"><select id="genre"><option>All Genres</option></select><UpDown /></SelectBox>
      </LoopBar>
      <Filters>
        <Search>
          <Icon w={38} h={26}>
            <circle cx="10" cy="10" r="9" strokeWidth="2" />
            <path d="M16 17l8 9" strokeWidth="3" /><path d="M28 12l4 4 4-4" />
          </Icon>
          <input type="search" placeholder="Search Loops" aria-label="Search Loops" />
        </Search>
        <FilterRow>
          <ViewToggle>
            <ViewButton $on aria-label="Button view">
              <Icon w={24} h={24}>
                {[[1, 1], [15, 1], [1, 15], [15, 15]].map(([x, y]) => <rect key={`${x}-${y}`} x={x} y={y} width="8" height="8" rx="1" />)}
              </Icon>
            </ViewButton>
            <ViewButton aria-label="Column view">
              <Icon w={26} h={20}><path d="M1 1h24v18H1zM9 1v18M17 1v18" strokeLinejoin="miter" /></Icon>
            </ViewButton>
          </ViewToggle>
          <FilterLabel htmlFor="scale">Scale:</FilterLabel>
          <SelectBox $width={231} $tone="mid"><select id="scale"><option>Any</option></select><UpDown /></SelectBox>
          <FilterLabel $gap htmlFor="signature">Signature:</FilterLabel>
          <SelectBox $width={162} $tone="mid"><select id="signature"><option>Any</option></select><UpDown /></SelectBox>
        </FilterRow>
      </Filters>
      <Keywords>
        <KeywordColumn>
          {instruments.map((pair) => (
            <KeywordRow key={pair[0]}>
              {pair.map((name) => (
                <Keyword key={name} $tone={toneOf[name] ?? "off"}>
                  {name}
                  {name === "Reset" && (
                    <Icon w={21} h={21}>
                      <circle cx="10.500" cy="10.500" r="10.500" fill="#fff" stroke="none" />
                      <path d="M7 7l7 7M14 7l-7 7" stroke="#a96417" strokeWidth="3" />
                    </Icon>
                  )}
                  {name === "Favorites" && <Heart fill="#999" />}
                </Keyword>
              ))}
            </KeywordRow>
          ))}
        </KeywordColumn>
        <KeywordColumn>
          {genres.map((pair) => (
            <KeywordRow key={pair[0]}>{pair.map((name) => <Keyword key={name} $tone="on">{name}</Keyword>)}</KeywordRow>
          ))}
          {descriptors.map(([a, b]) => (
            <KeywordRow key={a} $joined>
              <Keyword $tone="on" $edge="left">{a}</Keyword>
              <Keyword $tone="on" $edge="right">{b}</Keyword>
            </KeywordRow>
          ))}
        </KeywordColumn>
      </Keywords>
      <Grip />
      <Results ref={scroller}>
        <LoopTable>
          <colgroup>
            <Col $width={60} /><Col /><Col $width={100} /><Col $width={56} /><Col $width={102} /><Col $width={71} />
          </colgroup>
          <thead>
            <tr><th aria-label="Kind" /><th>Name</th><th>Beats</th><th aria-label="Favorite"><Heart fill="#fff" /></th><th>Tempo</th><th>Key</th></tr>
          </thead>
          <tbody>
            {loops.map(([name, time], i) => (
              <LoopRow key={name} $playing={i === 6}>
                <td><LoopKind><Icon w={26} h={18}><path d={wave([3, 12, 8, 18, 8, 12, 3], 4, 18)} strokeWidth="1.800" /></Icon></LoopKind></td>
                <td>{name}</td>
                <td>{time}</td>
                <td><FavoriteBox type="checkbox" $playing={i === 6} aria-label={`Favorite ${name}`} /></td>
                <td>-</td>
                <td>-</td>
              </LoopRow>
            ))}
          </tbody>
        </LoopTable>
      </Results>
      <Footer>
        <Icon w={22} h={20}><path d="M0 6h5l7-6v20l-7-6H0z" {...solid} /><path d="M17 5q4 5 0 10" strokeWidth="2" /></Icon>
        <PreviewVolume type="range" aria-label="Preview volume" defaultValue={48} />
        <Icon w={32} h={24}><path d="M0 8h5l7-6v20l-7-6H0z" {...solid} /><path d="M17 7q4 5 0 10M22 4q6 8 0 16M27 1q8 11 0 22" strokeWidth="2" /></Icon>
        <label htmlFor="play-in">Play in:</label>
        <SelectBox $width={228} $tone="dark"><select id="play-in"><option>Song Key</option></select><UpDown /></SelectBox>
        <ItemCount>3340 items</ItemCount>
      </Footer>
    </Panel>
  );
}

export default function App() {
  return (
    <Window>
      <GlobalStyle />
      <TransportBar />
      <Panels>
        <TracksPanel />
        <LoopsPanel />
      </Panels>
    </Window>
  );
}
